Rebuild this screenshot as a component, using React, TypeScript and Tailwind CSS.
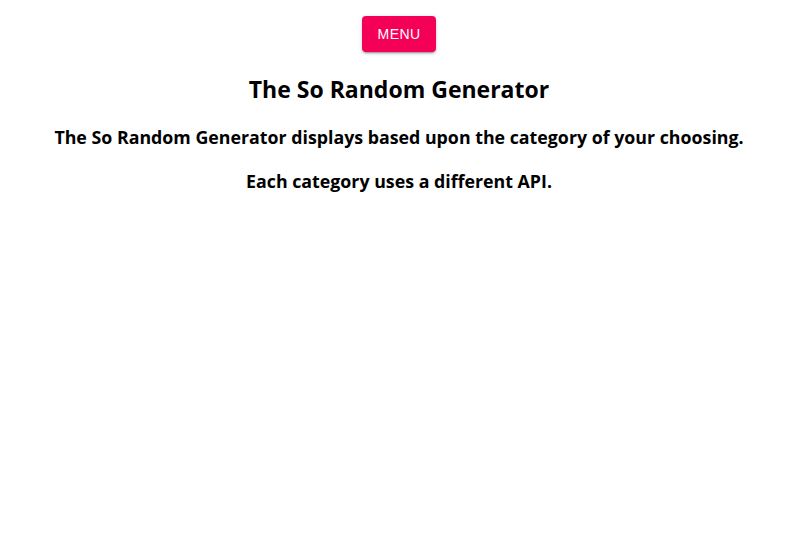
export default function App() {
  return (
    <div className="min-h-[536px] bg-white flex flex-col items-center text-black">
      {/* Menu button */}
      <button className="mt-4 h-9 px-4 rounded bg-[#f50057] text-white text-sm uppercase tracking-[0.02857em] shadow-[0_3px_1px_-2px_rgba(0,0,0,0.2),0_2px_2px_0_rgba(0,0,0,0.14),0_1px_5px_0_rgba(0,0,0,0.12)] font-['Liberation_Sans',Arial,sans-serif]">
        Menu
      </button>

      <div className="flex flex-col items-center font-['Open_Sans','Noto_Sans',sans-serif] font-bold">
        <h1 className="mt-[23px] text-[23px] leading-7">The So Random Generator</h1>
        <h3 className="mt-[20px] text-[17.8px] leading-7">
          The So Random Generator displays based upon the category of your choosing.
        </h3>
        <h3 className="mt-[16px] text-[17.8px] leading-7">Each category uses a different API.</h3>
      </div>
    </div>
  );
}
